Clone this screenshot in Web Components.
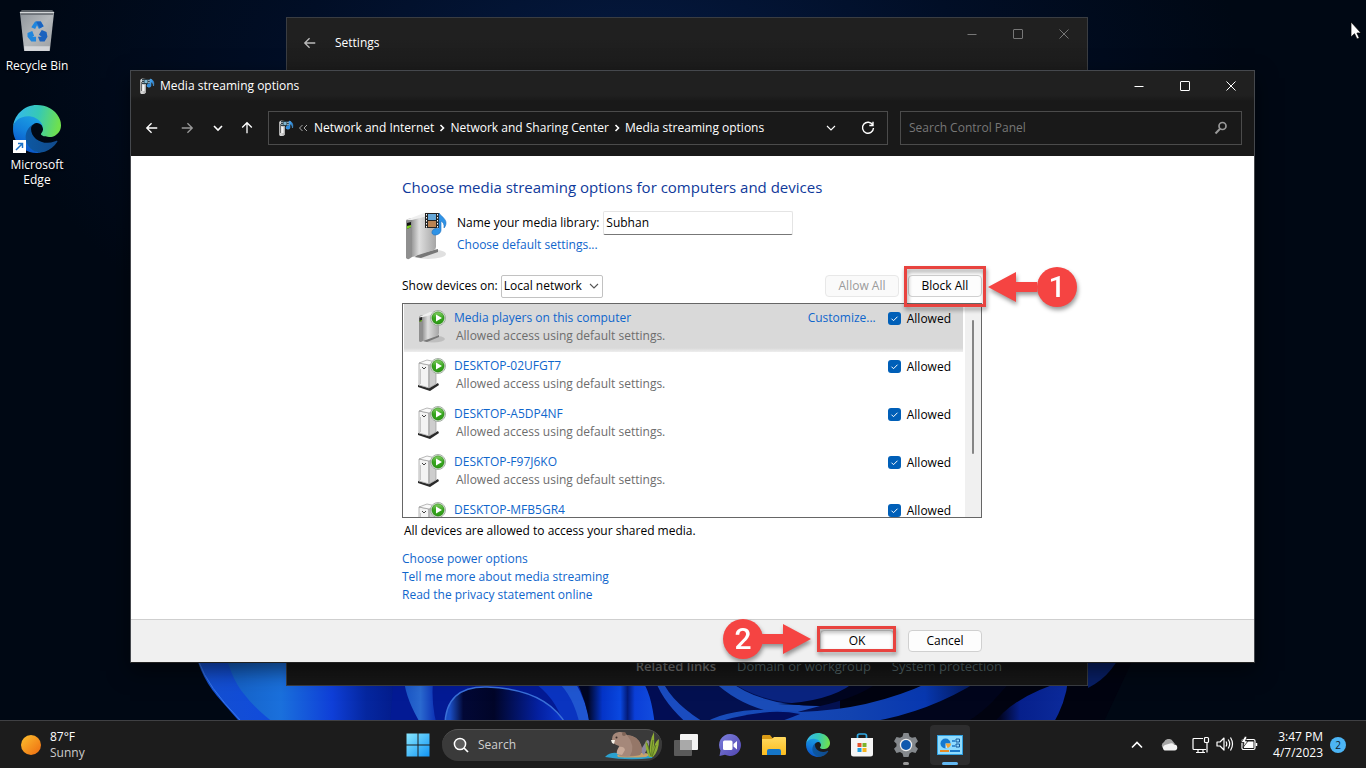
<!DOCTYPE html>
<html lang="en">
<head>
<meta charset="utf-8">
<title>Media streaming options</title>
<style>
  html, body { height: 100%; margin: 0; }
  body {
    font: 12px/18px "Open Sans", "Noto Sans", sans-serif;
    color: #000; background: #000a18; overflow: hidden;
  }
</style>
</head>
<body>
<desk-top>
  <desk-icon slot="icons" icon="bin">Recycle Bin</desk-icon>
  <desk-icon slot="icons" icon="edge" shortcut>Microsoft Edge</desk-icon>
  <settings-window slot="windows"></settings-window>
  <media-window slot="windows"></media-window>
  <task-bar slot="bar"></task-bar>
</desk-top>

<script>
const BOX = ':host, *, ::before, ::after { box-sizing: border-box } ';
const define = (name, css, html, ready) => {
  const template = document.createElement('template');
  template.innerHTML = `<style>${BOX}${css}</style>${html}`;
  customElements.define(name, class extends HTMLElement {
    constructor() {
      super();
      this.attachShadow({ mode: 'open' }).append(template.content.cloneNode(true));
    }
    connectedCallback() { if (ready) ready.call(this, this.shadowRoot); }
  });
};

const STREAM = `
  <linearGradient id="box" x1="0" x2="1"><stop stop-color="#9b9b9b"/><stop offset=".3" stop-color="#dedede"/><stop offset="1" stop-color="#a5a5a5"/></linearGradient>`;

const ICONS = {
  back: ['0 0 16 16', '<path d="M14 8H2.500M7.500 2.500 2 8l5.500 5.500" fill="none" stroke="currentColor" stroke-width="1.500"/>'],
  up: ['0 0 16 16', '<path d="M8 14V2.500M2.500 7.500 8 2l5.500 5.500" fill="none" stroke="currentColor" stroke-width="1.500"/>'],
  forward: ['0 0 16 16', '<path d="M2 8h11.500M8.500 2.500 14 8l-5.500 5.500" fill="none" stroke="currentColor" stroke-width="1.500"/>'],
  down: ['0 0 12 12', '<path d="m2 4 4 4 4-4" fill="none" stroke="currentColor" stroke-width="1.600"/>'],
  downthin: ['0 0 12 12', '<path d="m2 4 4 4 4-4" fill="none" stroke="currentColor" stroke-width="1.100"/>'],
  chevup: ['0 0 12 12', '<path d="m1 8.500 5-5 5 5" fill="none" stroke="currentColor" stroke-width="1.600"/>'],
  right: ['0 0 12 12', '<path d="m4.500 3 3 3-3 3" fill="none" stroke="currentColor" stroke-width="1.600"/>'],
  more: ['0 0 12 12', '<path d="m5.500 3-3 3 3 3m4.500-6-3 3 3 3" fill="none" stroke="currentColor"/>'],
  min: ['0 0 12 12', '<path d="M1.500 6.500h9" stroke="currentColor"/>'],
  max: ['0 0 12 12', '<rect x="1.500" y="1.500" width="9" height="9" rx=".5" fill="none" stroke="currentColor"/>'],
  close: ['0 0 12 12', '<path d="m1.500 1.500 9 9m0-9-9 9" stroke="currentColor"/>'],
  refresh: ['0 0 16 16', '<path d="M12.800 5A5.500 5.500 0 1 0 13.500 8M13 1.800V5.500H9.300" fill="none" stroke="currentColor" stroke-width="1.400"/>'],
  find: ['0 0 16 16', '<circle cx="9.500" cy="6" r="3.500" fill="none" stroke="currentColor" stroke-width="1.700"/><path d="M7 8.700 2.500 13.500" stroke="currentColor" stroke-width="2"/>'],
  lens: ['0 0 16 16', '<circle cx="7" cy="7" r="5.600" fill="#5c5c5c" stroke="currentColor" stroke-width="1.500"/><path d="m11 11 4 4" stroke="currentColor" stroke-width="1.700"/>'],
  pointer: ['0 0 12 19', '<path d="M1 1v15l3.500-3.300L7 18l2.300-1-2.400-5H11Z" fill="#fff" stroke="#000" stroke-width=".7"/>'],
  bin: ['0 0 40 44', `
    <linearGradient id="g" x1="0" y1="0" x2="1" y2="1"><stop stop-color="#8f959b"/><stop offset=".5" stop-color="#b4b8bb"/><stop offset="1" stop-color="#9a9ea2"/></linearGradient>
    <path d="M2 2h36l-4.500 41h-27Z" fill="url(#g)"/><path d="M2 2 4 0h32l2 2-1 3H3Z" fill="#5c6268"/><path d="M2 2h36v1.200H2Z" fill="#d3d6d8"/>
    <path d="M6.500 38h27l-.5 5H7Z" fill="#e1e3e5" opacity=".75"/>
    <g fill="#1f86dd"><path d="m14 18 4-6h6l3 5-5 3-2-4-2 4Z"/><path d="m10 24 5-2 2 5-2 1 4 0v5h-5l-4-5Z"/><path d="m30 23-5-2-3 5 3 2h-4l2 5h5l3-5Z" fill="#1a62bf"/><path d="m19 12 5 0 3 5-4 2Z" fill="#1a62bf"/></g>`],
  edge: ['0 0 256 256', `
    <linearGradient id="a" x1="60" x2="240" y1="177" y2="177" gradientUnits="userSpaceOnUse"><stop stop-color="#0c59a4"/><stop offset="1" stop-color="#114a8b"/></linearGradient>
    <linearGradient id="b" x1="120" x2="40" y1="70" y2="230" gradientUnits="userSpaceOnUse"><stop stop-color="#1b9de2"/><stop offset=".5" stop-color="#127fdb"/><stop offset="1" stop-color="#0a55c8"/></linearGradient>
    <linearGradient id="c" x1="10" y1="70" x2="240" y2="120" gradientUnits="userSpaceOnUse"><stop stop-color="#35b9ea"/><stop offset=".5" stop-color="#36c9b5"/><stop offset="1" stop-color="#6fe04e"/></linearGradient>
    <path fill="url(#a)" d="M231 190.500c-3.400 1.800-6.900 3.400-10.500 4.700-11.500 4.300-23.600 6.500-35.900 6.500-47.300 0-88.500-32.500-88.500-74.300.1-11.400 6.400-21.900 16.400-27.300-42.800 1.800-53.800 46.400-53.800 72.500 0 73.900 68.100 81.400 82.800 81.400 7.900 0 19.800-2.300 27-4.600l1.300-.4c27.600-9.500 51-28.100 66.600-52.800 1.200-1.900.6-4.300-1.200-5.500-1.300-.8-2.900-.9-4.200-.2z"/>
    <path fill="url(#b)" d="M105.700 241.400c-8.900-5.500-16.600-12.800-22.700-21.300-26.300-36-18.400-86.500 17.600-112.800 3.800-2.700 7.700-5.200 11.900-7.200 3.100-1.500 8.400-4.100 15.500-4 10.100.1 19.600 4.900 25.700 13 4 5.400 6.300 11.900 6.400 18.700 0-.2 24.500-79.600-80-79.600-43.900 0-80 41.700-80 78.200-.2 19.300 4 38.500 12.100 56 27.600 58.800 94.800 87.600 156.400 67.100-21.100 6.600-44.100 3.700-62.900-8.100z"/>
    <path fill="url(#c)" d="M152.300 148.900c-.8 1-3.300 2.500-3.300 5.700 0 2.600 1.700 5.100 4.700 7.200 14.400 10 41.500 8.700 41.600 8.700 10.700 0 21.100-2.900 30.300-8.300 18.800-11 30.400-31.100 30.400-52.900.3-22.400-8-37.300-11.300-43.900C223.500 23.900 177.700 0 128 0 58 0 1 56.200 0 126.200c.5-36.500 36.800-66 80-66 3.500 0 23.500.3 42 10.100 16.300 8.600 24.900 18.900 30.800 29.200 6.200 10.700 7.300 24.100 7.300 29.500 0 5.300-2.700 13.300-7.800 19.900z"/>`],
  shortcut: ['0 0 13 13', '<rect width="13" height="13" fill="#fff"/><path d="m3 10 6-6M5 3.500h4.500V8" fill="none" stroke="#1b72c9" stroke-width="1.500"/>'],
  streamsmall: ['0 0 16 16', `${STREAM}
    <path d="M1 2 3 .5 7 1v13.500L5.500 16H2l-1-1Z" fill="url(#box)"/><path d="M2 4h1v9H2Z" fill="#6e6e6e"/><path d="M3.500 7h2v6h-2Z" fill="#f4f4f4"/>
    <rect x="3" y="1" width="8" height="5" fill="#2b3f4a"/><path d="M3.500 2h1v1h-1Zm0 2h1v1h-1Zm6-2h1v1h-1Zm0 2h1v1h-1Z" fill="#fff"/><path d="M5.500 2h3v3h-3Z" fill="#7fb4cf"/>
    <path d="M12 1v6.500a2 1.700 0 1 1-1-1.500V1c3 .5 4.500 3 3.500 7C14.200 5.500 13 4 12 4Z" fill="#2a8be0" stroke="#57a9ea" stroke-width=".5"/>`],
  stream: ['0 0 44 50', `${STREAM}
    <ellipse cx="24" cy="43" rx="18" ry="5" fill="#000" opacity=".12"/>
    <path d="m14 43 20-5v3l-17 6-6-1Z" fill="#777"/>
    <path d="M2 10q0-1.500 2-2l4-1v39l-3 2q-2 .5-3-1Z" fill="#8f8f8f"/><path d="M8 8 24 2l8 2v32q0 2-2 3L8 46Z" fill="url(#box)"/>
    <path d="m2 9 18-7q2-.6 4-.4l8 1.400L8 9Z" fill="#efefef"/><path d="m3 12 4-1v5l-4 2Z" fill="#111"/><path d="m3 15 4-1v2l-4 2Z" fill="#7ed321"/>
    <rect x="21" y="2" width="14" height="15" fill="#222"/><rect x="24" y="3" width="8" height="6" fill="#65a7d8"/><rect x="24" y="10" width="8" height="6" fill="#b98252"/>
    <path d="M22.500 3v14m11-14v14" stroke="#fff" stroke-dasharray="1.500 1.500"/>
    <path d="M35 2c3 4 7 6 7 10 0 2-1 4-2 5 .5-4-1-6-3-7v9c0 3-3 5-6 5s-4-3-2-5 5-2 6-1Z" fill="#2f93e6" stroke="#1b6fc0" stroke-width=".6"/>`],
  device: ['0 0 28 34', `${STREAM}
    <ellipse cx="15" cy="30" rx="12" ry="3.500" fill="#000" opacity=".12"/><path d="m8 30 13-4v2l-12 5-4-1Z" fill="#777"/>
    <path d="M1 8q0-1 1.500-1.500L5 6v26l-2 1q-2 0-2-1Z" fill="#8f8f8f"/><path d="m5 7 10-4 6 1v20q0 2-2 3L5 32Z" fill="url(#box)"/><path d="m1 8 11-5 9 1-16 4Z" fill="#eee"/>
    <path d="m1.500 9 2.500-1v4l-2.500 1Z" fill="#222"/><path d="m1.500 12 2.500-1v1l-2.500 1Z" fill="#7ed321"/>`],
  pc: ['0 0 28 34', `
    <path d="m0 28 11 3 9-5 1 2-9 6L0 30Z" fill="#2a2a2a"/><path d="m1 6 10 2v23L1 28Z" fill="#f3f3f3" stroke="#9a9a9a" stroke-width=".7"/>
    <path d="m11 8 7-3v22l-7 4Z" fill="#cdcdcd" stroke="#9a9a9a" stroke-width=".7"/><path d="m1 6 8-3 9 2-7 3Z" fill="#fafafa" stroke="#999" stroke-width=".7"/>
    <path d="m4 10 2 2 2-2" fill="none" stroke="#444"/><path d="M2.500 12v15M11 9v21" stroke="#aaa" stroke-width=".6"/>`],
  play: ['0 0 16 16', `<linearGradient id="p" y2="1" x2="0"><stop stop-color="#86d067"/><stop offset=".5" stop-color="#36a51d"/><stop offset="1" stop-color="#2e9a17"/></linearGradient>
    <circle cx="8" cy="8" r="7.500" fill="#fff" stroke="#8d9a8d" stroke-width=".8"/><circle cx="8" cy="8" r="6.200" fill="url(#p)" stroke="#21760f" stroke-width=".6"/><path d="m6 4.500 6 3.500-6 3.500Z" fill="#fff"/>`],
  sun: ['0 0 20 20', '<linearGradient id="s" x1="0" y1="0" x2="1" y2="1"><stop stop-color="#fcc12e"/><stop offset="1" stop-color="#ee6a10"/></linearGradient><circle cx="10" cy="10" r="10" fill="url(#s)"/>'],
  start: ['0 0 24 24', '<linearGradient id="w" x1="0" y1="0" x2="24" y2="24" gradientUnits="userSpaceOnUse"><stop stop-color="#8be9ff"/><stop offset="1" stop-color="#0f93f5"/></linearGradient><path d="M.5.500h11v11H.5Zm12 0h11v11h-11Zm-12 12h11v11H.5Zm12 0h11v11h-11Z" fill="url(#w)"/>'],
  taskview: ['0 0 26 24', '<rect x="7" y="1" width="18" height="16" rx="1" fill="#f4f4f4"/><rect x="1" y="7" width="18" height="16" rx="1" fill="#5a5a5a"/><path d="M7 7h12v10H7Z" fill="#a9a9a9"/>'],
  chat: ['0 0 24 24', '<linearGradient id="v" x1="0" y1="0" x2="1" y2="1"><stop stop-color="#7c80dd"/><stop offset="1" stop-color="#5145b0"/></linearGradient><path d="M12 1a11 11 0 1 1-5 20.800L1.500 23l1-5.500A11 11 0 0 1 12 1Z" fill="url(#v)"/><rect x="5" y="7.500" width="9.500" height="9.500" rx="1.500" fill="#fff"/><path d="m15.500 11 3.500-3v8.500l-3.500-3Z" fill="#fff"/>'],
  folder: ['0 0 26 24', '<linearGradient id="f" y2="1" x2="0"><stop stop-color="#ffd95f"/><stop offset="1" stop-color="#fbbc1e"/></linearGradient><path d="M1 3.500C1 2 2 2 2.500 2H9l2.500 3H24v7H1Z" fill="#d99a15"/><path d="M1 6h10l2-2h11q1 0 1 1v16q0 1-1 1H1Z" fill="url(#f)"/><path d="M6 22v-4q0-2 2-2h10q2 0 2 2v4Z" fill="#1576c8"/>'],
  store: ['0 0 24 24', '<path d="M7.500 6V3q0-2 2-2h5q2 0 2 2v3" fill="none" stroke="#2fa8e3" stroke-width="1.700"/><path d="M1 5h22v16q0 2.500-2.500 2.500h-17Q1 23.500 1 21Z" fill="#f5f5f5"/><path d="M7.500 10h4v4h-4Z" fill="#e4502a"/><path d="M12.500 10h4v4h-4Z" fill="#7cb32b"/><path d="M7.500 15h4v4h-4Z" fill="#1f9fe0"/><path d="M12.500 15h4v4h-4Z" fill="#f7b51c"/>'],
  gear: ['0 0 24 24', '<path d="m9.500 0 5 0 1 3.500 2.500 1.300L21.500 4l2.500 4.300-2.500 2.500v2.500l2.500 2.500-2.500 4.200-3.500-1-2.500 1.500-1 3.500h-5l-1-3.500L6 19l-3.500 1L0 15.800l2.500-2.500v-2.500L0 8.300 2.500 4 6 4.800l2.500-1.300Z" fill="#84888c"/><circle cx="12" cy="12" r="6.200" fill="#eee"/><circle cx="12" cy="12" r="4.900" fill="#0f59ae"/>'],
  panel: ['0 0 26 20', '<rect x=".5" y=".5" width="25" height="19" fill="#8fdcff" stroke="#2f9fe0"/><circle cx="8.500" cy="8.500" r="5" fill="#1679cf"/><path d="M8.500 8.500h5a5 5 0 0 1-5 5Z" fill="#bfe9ff"/><path d="M8.500 8.500h5.500a5 5 0 0 1-3.500 4.500Z" fill="#f3a635"/><path d="M15 6h3m-3 5h3" stroke="#1a78c8" stroke-width="1.500"/><path d="M19 4h3.500v3H19Zm0 5h3.500v3H19Z" fill="none" stroke="#15599c"/><path d="M3 16h9" stroke="#e58b25" stroke-width="2"/><path d="M13 16h10" stroke="#1a78c8" stroke-width="2"/>'],
  beaver: ['0 0 58 30', `
    <path d="M2 27Q7 22 14 23l34 1q3 1 1 4-24 3-47-1Z" fill="#2aa1cf"/><path d="M14 25q14-5 34-1l-5 3q-16 1-28 0Z" fill="#c9a36b"/>
    <path d="m37 21 7-11q3 0 2 5l-5 10Z" fill="#8c86a0"/>
    <path d="M9 9q0-6 7-7 5-.5 8 3 11 1 14 10 2 6-1 10-11 3-21 1l2-4q-3-1-2-6-7-2-7-7Z" fill="#a5887a"/><path d="M16 17q5-1 6 3l-3 5-5-1q-1-3 2-7Z" fill="#c7a998"/>
    <path d="M24 5q11 1 14 10 2 6-1 10-5 1-10 1 6-10-3-21Z" fill="#957768"/>
    <circle cx="13.500" cy="7.500" r="1" fill="#3a2c28"/><circle cx="21" cy="4" r="2" fill="#806558"/><path d="m8 10 4 0-1 4-2-1Z" fill="#f4efe6"/>
    <path d="M46 27Q41 17 43 10q3 7 4 14Q46 11 51 2q1 11-1 21 1-11 6-14 0 12-6 18Z" fill="#8fae35"/><path d="M49 26q-1-9 1-16m-6 3 4 13m5-11-4 12" stroke="#5d7d22" fill="none"/>`],
  cloud: ['0 0 18 12', '<path d="M5 10.500a4 4 0 0 1-1-7.500 5 5 0 0 1 9-.5L15 5Z" fill="#a5a5a5"/><path d="M4.500 11.500A3 3 0 0 1 5 6l5-1.500A4 4 0 0 1 14 5.500 3 3 0 0 1 14.500 11.500Z" fill="#f2f2f2"/>'],
  net: ['0 0 18 18', '<path d="M11 2.500H2q-1 0-1 1v9q0 1 1 1h12M4 16.500h9M6 13.500v3m5-3v3m4-10v10" fill="none" stroke="#fff" stroke-width="1.200"/><rect x="12.500" y="1.500" width="4" height="5" rx="1" fill="#1c1c1c" stroke="#fff" stroke-width="1.200"/>'],
  volume: ['0 0 18 16', '<path d="M1 6v4h3l4 4V2L4 6Zm9-.5q1.500 2.500 0 5m2.200-7q3 4.500 0 9m2.300-11q4 6.500 0 13" fill="none" stroke="#fff" stroke-width="1.200" stroke-linejoin="round"/>'],
  battery: ['0 0 18 16', '<rect x="2" y="3.500" width="13" height="10" rx="1.500" fill="none" stroke="#fff" stroke-width="1.200"/><rect x="4" y="5.500" width="9.500" height="6.500" fill="#fff"/><path d="M16.500 7v3" stroke="#fff" stroke-width="1.500"/><path d="M5 0 1 6.500h3l-1 5L8 5H5.500L7 1Z" fill="#fff" stroke="#1c1c1c" stroke-width=".8"/>']
};

/* Line-art and picture icons: name, w, h (h defaults to w). */
define('ui-icon', ':host { display: inline-flex; flex: none } svg { display: block }', '<svg aria-hidden="true"></svg>', function (root) {
  const [box, art] = ICONS[this.getAttribute('name')];
  const svg = root.querySelector('svg');
  const w = this.getAttribute('w') || 16;
  svg.setAttribute('viewBox', box);
  svg.setAttribute('width', w);
  svg.setAttribute('height', this.getAttribute('h') || w);
  svg.innerHTML = art;
});

define('wall-paper', ':host { display: block } svg { display: block; width: 100%; height: 100% }', `
<svg viewBox="0 0 1366 768" preserveAspectRatio="xMidYMax slice" aria-hidden="true">
  <defs>
    <radialGradient id="sky" cx=".46" cy=".1" r=".45"><stop stop-color="#051a42"/><stop offset=".55" stop-color="#010e26"/><stop offset="1" stop-color="#000814"/></radialGradient>
    <linearGradient id="p1" x1="200" x2="300" gradientUnits="userSpaceOnUse"><stop stop-color="#1450d0"/><stop offset="1" stop-color="#0f49e0"/></linearGradient>
    <linearGradient id="p2" x1="230" x2="400" gradientUnits="userSpaceOnUse"><stop stop-color="#1561c6"/><stop offset=".3" stop-color="#1a70dc"/><stop offset=".6" stop-color="#0f3fd8"/><stop offset=".8" stop-color="#0527a0"/><stop offset="1" stop-color="#031a88"/></linearGradient>
    <linearGradient id="p3" x1="405" x2="436" gradientUnits="userSpaceOnUse"><stop stop-color="#1a55c4"/><stop offset=".5" stop-color="#2a69cf"/><stop offset="1" stop-color="#0b2fb4"/></linearGradient>
    <linearGradient id="deep" x1="450" x2="560" gradientUnits="userSpaceOnUse"><stop stop-color="#1a4ec4"/><stop offset=".12" stop-color="#020836"/><stop offset=".4" stop-color="#010528"/><stop offset=".8" stop-color="#0420a0"/><stop offset="1" stop-color="#0a33c8"/></linearGradient>
    <linearGradient id="mid" x1="588" x2="660" gradientUnits="userSpaceOnUse"><stop stop-color="#010624"/><stop offset=".2" stop-color="#0434c8"/><stop offset=".45" stop-color="#0a48e0"/><stop offset=".55" stop-color="#031a78"/><stop offset=".65" stop-color="#0b3fd8"/><stop offset="1" stop-color="#1450e0"/></linearGradient>
    <linearGradient id="p5" x1="700" x2="1000" gradientUnits="userSpaceOnUse"><stop stop-color="#1a4ebc"/><stop offset=".5" stop-color="#1243b0"/><stop offset=".75" stop-color="#0838b0"/><stop offset="1" stop-color="#010524"/></linearGradient>
    <linearGradient id="p6" x1="1000" x2="1068" gradientUnits="userSpaceOnUse"><stop stop-color="#010420"/><stop offset=".3" stop-color="#06208c"/><stop offset="1" stop-color="#0c2b9c"/></linearGradient>
  </defs>
  <rect width="1366" height="768" fill="url(#sky)"/>
  <path d="M242 640h900l-42 90H242Z" fill="#010310"/>
  <path d="M193 640q4 32 24 56l28 32h165l-5-88Z" fill="url(#p1)"/>
  <path d="M199 662q8 24 41 58" fill="none" stroke="#3b78e8"/>
  <path d="M222 640q8 38 22 54 12 16 34 32h140v-86Z" fill="url(#p2)"/>
  <path d="M395 660h210v66H390Z" fill="#031a94"/>
  <path d="M404 680q2 20 18 46h15q-6-22-4-46Z" fill="url(#p3)"/>
  <path d="M530 680q26 16 34 46h24q-4-26-14-46Z" fill="#0a34c0"/>
  <path d="M556 680q18 16 24 46h10q-2-22-16-46Z" fill="#2056d0"/>
  <path d="M445 726q0-40 42-39 60 2 80 39Z" fill="url(#deep)"/>
  <path d="M445 726q0-40 42-39 60 2 80 39" fill="none" stroke="#3a70d8" stroke-width="1.500"/>
  <path d="M576 680q10 20 14 46h240v-46Z" fill="url(#mid)"/>
  <path d="M641 680q10 10 14 46h40q-30-24-36-46Z" fill="#020d54"/>
  <path d="M655 680q10 26 45 46h140v-46Z" fill="#031050"/>
  <path d="M662 680q10 24 48 46h-20q-26-22-35-46Z" fill="#1a4cc0"/>
  <path d="M712 680q34 32 78 34l30-8q-60 0-92-26Z" fill="#1a4cb8"/>
  <path d="M728 680q34 24 80 24 30-4 54-24Z" fill="#0a2480"/>
  <path d="M778 704q50-2 74-20h24q-20 14-56 22Z" fill="#010520"/>
  <path d="M700 726q30-22 100-14 70-2 130-30h80q-20 24-60 44Z" fill="url(#p5)"/>
  <path d="M700 728q60-22 100-14-14 6-40 14Z" fill="#020d5c"/>
  <path d="M870 722q60-10 110-42h30q-20 30-50 46Z" fill="#01051c"/>
  <path d="M1068 680q-2 22-16 46h-60q20-30 76-46Z" fill="url(#p6)"/>
  <path d="M1088 640h38q-10 34-38 48Z" fill="#081f66"/>
</svg>`);

define('desk-top', `
  :host { display: grid; position: relative; height: 100vh; grid-template-rows: 1fr auto; overflow: hidden }
  wall-paper { position: absolute; inset: 0 }
  main { position: relative; min-height: 0 }
  nav { display: flex; flex-direction: column; width: 74px; padding-top: 8px; gap: 32px }
  .pointer { position: absolute; top: 21px; right: 4px; z-index: 3 }`, `
  <wall-paper></wall-paper>
  <main><nav aria-label="Desktop"><slot name="icons"></slot></nav><slot name="windows"></slot></main>
  <slot name="bar"></slot>
  <ui-icon class="pointer" name="pointer" w="12" h="19"></ui-icon>`);

define('desk-icon', `
  :host { display: block }
  button { display: flex; flex-direction: column; align-items: center; width: 100%; padding: 0; border: 0; background: none;
    color: #fff; font: inherit; line-height: 15px; gap: 5px; text-shadow: 0 1px 2px #000 }
  .art { position: relative; display: grid; place-items: center; height: 45px }
  .badge { position: absolute; left: 0; bottom: 0 }
  .text { padding: 0 4px }
  :host([shortcut]) button { gap: 4px }
  :host([shortcut]) .art { height: 48px }`, `
  <button type="button"><span class="art"></span><span class="text"><slot></slot></span></button>`, function (root) {
  const edge = this.hasAttribute('shortcut');
  root.querySelector('.art').innerHTML = edge
    ? '<ui-icon name="edge" w="48"></ui-icon><ui-icon class="badge" name="shortcut" w="13"></ui-icon>'
    : '<ui-icon name="bin" w="38" h="44"></ui-icon>';
});

define('window-controls', `
  :host { display: flex; color: #fff }
  button { width: 46px; padding: 0; border: 0; background: none; color: inherit; display: grid; place-items: center }`, `
  <button type="button" aria-label="Minimize"><ui-icon name="min" w="12"></ui-icon></button>
  <button type="button" aria-label="Maximize"><ui-icon name="max" w="12"></ui-icon></button>
  <button type="button" aria-label="Close"><ui-icon name="close" w="12"></ui-icon></button>`);

define('settings-window', `
  :host { position: absolute; left: 286px; right: 278px; top: 17px; bottom: 34px; display: flex; flex-direction: column;
    justify-content: space-between; background: linear-gradient(#202020 0 20px, #1b1b1b 60px, #171717); border: 1px solid #3a3d42; color: #fff }
  header { display: flex; align-items: flex-start }
  .bar { display: flex; align-items: center; gap: 18px; flex: 1; height: 50px; padding-left: 16px }
  .bar button { padding: 0; border: 0; background: none; color: #bbb; display: flex }
  window-controls { height: 32px; color: #777 }
  footer { display: flex; gap: 21px; padding: 0 85px 9px; justify-content: flex-end; font-size: 13px; line-height: 20px; color: #777 }
  b { font-weight: 600 }
  a { color: #56696b; text-decoration: none }`, `
  <header><div class="bar"><button type="button" aria-label="Back"><ui-icon name="back" w="14"></ui-icon></button><span>Settings</span></div><window-controls></window-controls></header>
  <footer><b>Related links</b><a href="#domain">Domain or workgroup</a><a href="#protection">System protection</a></footer>`);

define('explorer-bar', `
  :host { display: flex; padding: 10px 12px 11px 4px; background: #191919; color: #fff }
  button { border: 0; padding: 0; background: none; color: inherit; font: inherit; display: grid; place-items: center }
  .go { width: 34px } .go.dim { color: #999; width: 36px } .go.list { width: 26px } .go.up { width: 32px; margin-right: 5px }
  .address, .search { display: flex; align-items: center; height: 34px; border: 1px solid #4b4b4b }
  .address { flex: 1; padding: 0 1px 0 9px }
  .more { margin: 0 5px 0 3px; color: #aaa }
  .sep { width: 16px; justify-content: center }
  .end { width: 37px }
  .fill { flex: 1 }
  a { color: inherit; text-decoration: none; white-space: nowrap }
  .search { flex: 0 1 342px; margin-left: 12px; padding: 0 12px 0 8px; color: #999 }
  input { flex: 1; min-width: 0; padding: 0; border: 0; outline: 0; background: none; color: #fff; font: inherit }
  input::placeholder { color: #777; opacity: 1 }`, `
  <button class="go" type="button" aria-label="Back"><ui-icon name="back" w="14"></ui-icon></button>
  <button class="go dim" type="button" aria-label="Forward"><ui-icon name="forward" w="14"></ui-icon></button>
  <button class="go list" type="button" aria-label="Recent"><ui-icon name="down" w="12"></ui-icon></button>
  <button class="go up" type="button" aria-label="Up"><ui-icon name="up" w="14"></ui-icon></button>
  <div class="address">
    <ui-icon name="streamsmall" w="16"></ui-icon>
    <ui-icon class="more" name="more" w="12"></ui-icon>
    <a href="#network">Network and Internet</a><ui-icon class="sep" name="right" w="12"></ui-icon>
    <a href="#sharing">Network and Sharing Center</a><ui-icon class="sep" name="right" w="12"></ui-icon>
    <a href="#media">Media streaming options</a><span class="fill"></span>
    <button class="end" type="button" aria-label="History"><ui-icon name="downthin" w="12"></ui-icon></button>
    <button class="end" type="button" aria-label="Refresh"><ui-icon name="refresh" w="16"></ui-icon></button>
  </div>
  <label class="search"><input type="search" placeholder="Search Control Panel" aria-label="Search Control Panel"><ui-icon name="find" w="16"></ui-icon></label>`);

define('push-button', `
  :host { display: block; position: relative }
  button { display: block; width: 74px; height: 22px; padding: 0; border: 1px solid #d0d0d0; border-radius: 4px; background: #fdfdfd;
    font: inherit; line-height: 20px; color: #000 }
  button:disabled { border-color: #e8e8e8; background: #fafafa; color: #9b9b9b }`, `
  <button type="button"><slot></slot></button><slot name="mark"></slot>`, function (root) {
  root.querySelector('button').disabled = this.hasAttribute('disabled');
});

/* Red frame, arrow and numbered disc laid over a button. */
define('step-mark', `
  :host { position: absolute; display: flex; align-items: center; z-index: 2; pointer-events: none; filter: drop-shadow(1px 3px 2px #0006) }
  :host([side=right]) { left: -4px; top: -9px }
  :host([side=left]) { right: -2px; top: -11px; flex-direction: row-reverse }
  .frame { width: 82px; height: 41px; border: 3px solid #e8433f }
  :host([side=left]) .frame { width: 79px; height: 26px }
  svg { display: block; width: 50px; height: 30px; margin-left: 1px }
  :host([side=left]) svg { transform: scaleX(-1); margin: 0 5px 0 -1px }
  .disc { width: 40px; height: 40px; border-radius: 50%; background: #f54442; color: #fff; text-align: center;
    font: 500 30px/40px Roboto, sans-serif }`, `
  <span class="frame"></span>
  <svg viewBox="0 0 50 30" aria-hidden="true"><path d="M1 15 29 0v10h21v10H29v10Z" fill="#f54442"/></svg>
  <span class="disc"><slot></slot></span>`);

define('device-row', `
  :host { display: grid; grid-template-columns: 28px 1fr auto auto; column-gap: 8px; height: 48px; padding: 5px 12px 0 14px; flex: none; align-items: start }
  :host([selected]) { background: linear-gradient(#d9d9d9 0 44px, #eee) }
  .pic { position: relative; height: 34px }
  .pic .play { position: absolute; right: 0; top: 1px }
  .text { display: flex; flex-direction: column }
  .text span { padding-left: 2px; color: #6d6d6d }
  a { color: #0f66cc; text-decoration: none }
  .custom { margin-right: 4px }
  label { display: flex; align-items: center; gap: 6px; line-height: 19px }
  input { appearance: none; margin: 0; width: 13px; height: 13px; border-radius: 3px;
    background: #005fb8 url('data:image/svg+xml,<svg xmlns="http://www.w3.org/2000/svg" viewBox="0 0 13 13"><path d="m3.500 6.700 2 2 4-4" fill="none" stroke="white"/></svg>') }
  input:not(:checked) { background: #fff; border: 1px solid #777 }`, `
  <div class="pic"></div>
  <div class="text"><a href="#device"><slot></slot></a><span>Allowed access using default settings.</span></div>
  <a class="custom" href="#customize"></a>
  <label><input type="checkbox" checked>Allowed</label>`, function (root) {
  const own = this.hasAttribute('selected');
  root.querySelector('.pic').innerHTML = `<ui-icon name="${own ? 'device' : 'pc'}" w="28" h="34"></ui-icon><ui-icon class="play" name="play" w="16"></ui-icon>`;
  if (own) root.querySelector('.custom').textContent = 'Customize...';
  else {
    root.querySelector('.custom').remove();
    root.querySelector('label').style.gridColumn = '4';
  }
});

define('media-window', `
  :host { position: absolute; left: 130px; right: 111px; top: 70px; border: 1px solid #45484d; border-bottom-color: #222; background: #fff; box-shadow: 0 8px 20px #0008 }
  header { display: flex; height: 30px; background: linear-gradient(#202020 80%, #191919); color: #fff; align-items: center; padding-left: 8px; gap: 5px }
  window-controls { margin-left: auto; height: 30px }
  .body, .actions { width: 581px; margin: 0 auto; padding-right: 1px }
  .body { padding-top: 19px; padding-bottom: 15px }
  h1 { margin: 0 0 12px; font-size: 15px; line-height: 24px; font-weight: 400; color: #0f3a9b }
  a { color: #0f66cc; text-decoration: none }
  .library { display: grid; grid-template-columns: 44px auto 1fr; column-gap: 4px; grid-template-rows: 24px 20px; align-items: center; padding-left: 2px; height: 50px }
  .library ui-icon { grid-row: 1 / 3; align-self: start }
  .library label, .library a { padding-left: 5px }
  .library a { grid-column: 2 / 4 }
  .library input { width: 190px; height: 24px; padding: 0 4px 2px 2px; font: inherit; border: 1px solid #e4e4e4; border-bottom-color: #777; border-radius: 2px; outline: 0 }
  .filter { display: flex; align-items: center; margin-top: 14px; height: 22px; gap: 9px }
  .filter label { display: flex; align-items: center; gap: 3px; margin-right: auto }
  .pick { display: grid; align-items: center }
  .pick > * { grid-area: 1 / 1 }
  .pick ui-icon { justify-self: end; margin-right: 3px; pointer-events: none; color: #555 }
  select { appearance: none; width: 102px; height: 23px; padding: 0 2px; border: 1px solid #c2c2c2; border-radius: 2px; background: #fff; font: inherit; color: #000 }
  .list { display: flex; height: 215px; margin-top: 6px; border: 1px solid #666; overflow: hidden }
  .rows { flex: 1; display: flex; flex-direction: column; padding-left: 1px; overflow: hidden }
  .rail { width: 16px; margin-left: 2px; background: #f0f0f0; padding: 16px 7px 0 }
  .rail span { display: block; height: 134px; background: #858585; border-radius: 1px }
  p { margin: 4px 2px 10px }
  .links { display: flex; flex-direction: column; align-items: flex-start }
  footer { border-top: 1px solid #cfcfcf; background: #f0f0f0; padding: 10px 0 }
  .actions { display: flex; justify-content: flex-end; gap: 14px }`, `
  <header><ui-icon name="streamsmall" w="16"></ui-icon><span>Media streaming options</span><window-controls></window-controls></header>
  <explorer-bar></explorer-bar>
  <div class="body">
    <h1>Choose media streaming options for computers and devices</h1>
    <div class="library">
      <ui-icon name="stream" w="44" h="50"></ui-icon>
      <label for="library">Name your media library:</label><input id="library" type="text" value="Subhan">
      <a href="#defaults">Choose default settings...</a>
    </div>
    <div class="filter">
      <label>Show devices on: <span class="pick"><select><option>Local network</option><option>All networks</option></select><ui-icon name="downthin" w="12"></ui-icon></span></label>
      <push-button disabled>Allow All</push-button>
      <push-button>Block All<step-mark slot="mark" side="right">1</step-mark></push-button>
    </div>
    <div class="list">
      <div class="rows">
        <device-row selected>Media players on this computer</device-row>
        <device-row>DESKTOP-02UFGT7</device-row>
        <device-row>DESKTOP-A5DP4NF</device-row>
        <device-row>DESKTOP-F97J6KO</device-row>
        <device-row>DESKTOP-MFB5GR4</device-row>
      </div>
      <div class="rail"><span></span></div>
    </div>
    <p>All devices are allowed to access your shared media.</p>
    <div class="links">
      <a href="#power">Choose power options</a>
      <a href="#more">Tell me more about media streaming</a>
      <a href="#privacy">Read the privacy statement online</a>
    </div>
  </div>
  <footer><div class="actions">
    <push-button>OK<step-mark slot="mark" side="left">2</step-mark></push-button>
    <push-button>Cancel</push-button>
  </div></footer>`);

define('task-bar', `
  :host { display: grid; grid-template-columns: 1fr auto 1fr; align-items: center; position: relative; height: 48px; background: #1c1c1c; border-top: 1px solid #3f4043; color: #fff }
  button { border: 0; padding: 0; background: none; color: inherit; font: inherit }
  .weather { display: flex; align-items: center; gap: 9px; padding-left: 21px; text-align: left; line-height: 16px }
  .weather small { display: block; font-size: 12px; color: #ccc }
  .apps { display: flex; align-items: center; gap: 4px; padding-left: 2px }
  .app { position: relative; width: 40px; height: 40px; display: grid; place-items: center; border-radius: 4px }
  .app.on { background: #2d2d2e }
  .app.on::after, .app.open::after { content: ""; position: absolute; bottom: 0; width: 16px; height: 3px; border-radius: 2px; background: #62b8f2 }
  .app.open::after { width: 6px; background: #999 }
  .search { display: flex; align-items: center; width: 220px; height: 32px; border-radius: 16px; background: #3a3a3a; border-top: 1px solid #555; padding: 0 1px 0 11px; gap: 9px; overflow: hidden }
  input { flex: 1; min-width: 0; padding: 0; border: 0; outline: 0; background: none; color: #fff; font: inherit }
  input::placeholder { color: #d0d0d0; opacity: 1 }
  .tray { display: flex; align-items: center; justify-content: flex-end; padding-right: 20px }
  .tray button { display: flex }
  .chev { margin-right: 17px } .cloud { margin-right: 14px } .system { gap: 6px; margin-right: 15px }
  .tray .clock { display: block; text-align: right; line-height: 16px; margin-right: 7px }
  .count { width: 16px; height: 16px; border-radius: 50%; background: #4cb5f5; color: #10202c; font-size: 10px; line-height: 16px; text-align: center }`, `
  <button class="weather" type="button"><ui-icon name="sun" w="20"></ui-icon><span>87°F<small>Sunny</small></span></button>
  <div class="apps">
    <button class="app" type="button" aria-label="Start"><ui-icon name="start" w="24"></ui-icon></button>
    <label class="search"><ui-icon name="lens" w="16"></ui-icon><input type="search" placeholder="Search" aria-label="Search"><ui-icon name="beaver" w="58" h="30"></ui-icon></label>
    <button class="app" type="button" aria-label="Task view"><ui-icon name="taskview" w="26" h="24"></ui-icon></button>
    <button class="app" type="button" aria-label="Chat"><ui-icon name="chat" w="24"></ui-icon></button>
    <button class="app" type="button" aria-label="File Explorer"><ui-icon name="folder" w="26" h="24"></ui-icon></button>
    <button class="app" type="button" aria-label="Microsoft Edge"><ui-icon name="edge" w="24"></ui-icon></button>
    <button class="app" type="button" aria-label="Microsoft Store"><ui-icon name="store" w="24"></ui-icon></button>
    <button class="app open" type="button" aria-label="Settings"><ui-icon name="gear" w="24"></ui-icon></button>
    <button class="app on" type="button" aria-label="Control Panel"><ui-icon name="panel" w="26" h="20"></ui-icon></button>
  </div>
  <div class="tray">
    <button class="chev" type="button" aria-label="Show hidden icons"><ui-icon name="chevup" w="12"></ui-icon></button>
    <button class="cloud" type="button" aria-label="OneDrive"><ui-icon name="cloud" w="18" h="12"></ui-icon></button>
    <button class="system" type="button" aria-label="System"><ui-icon name="net" w="18"></ui-icon><ui-icon name="volume" w="18" h="16"></ui-icon><ui-icon name="battery" w="18" h="16"></ui-icon></button>
    <button class="clock" type="button">3:47 PM<br>4/7/2023</button>
    <span class="count">2</span>
  </div>`);
</script>
</body>
</html>
